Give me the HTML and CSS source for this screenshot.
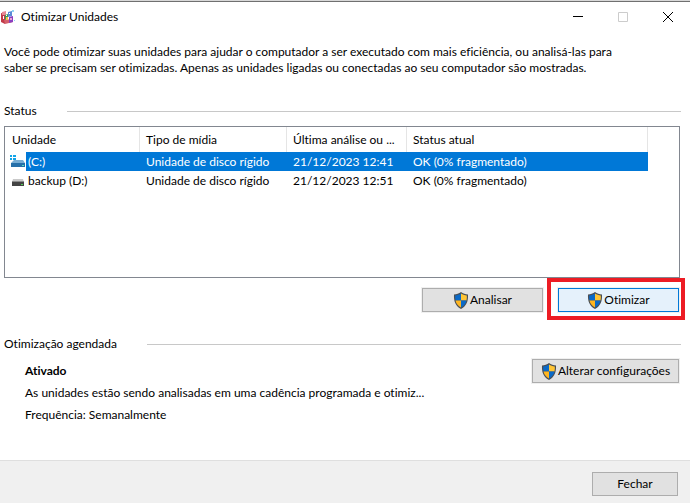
FILE: index.html
```html
<!DOCTYPE html>
<html lang="pt-BR">
<head>
<meta charset="UTF-8">
<title>Otimizar Unidades</title>
<link rel="stylesheet" href="styles.css">
</head>
<body>

<!-- shield shared by the buttons that need admin rights -->
<svg class="defs" width="0" height="0" aria-hidden="true">
    <symbol id="shield" viewBox="0 0 16 17">
        <path fill="#4a4f55" d="M8 0C6 1.6 3.600 2.300 1 2.400C.7 8.500 2 13.500 8 17C14 13.500 15.300 8.500 15 2.400C12.400 2.300 10 1.600 8 0Z"/>
        <path fill="#0a69c7" d="M8 1.500C6.300 2.700 4.500 3.300 2.200 3.500Q2 6.300 2.500 8.500H8Z"/>
        <path fill="#ffc535" d="M8 1.500C9.700 2.700 11.500 3.300 13.800 3.500Q14 6.300 13.500 8.500H8Z"/>
        <path fill="#ffb51f" d="M2.500 8.500H8V15.600C5 13.800 3.200 11.600 2.500 8.500Z"/>
        <path fill="#0a69c7" d="M13.500 8.500H8V15.600C11 13.800 12.800 11.600 13.500 8.500Z"/>
    </symbol>
</svg>

<div class="window">

    <header class="titlebar">
        <svg class="app-icon" width="16" height="16" viewBox="0 0 16 16" aria-hidden="true">
            <path fill="#c23a48" d="M1 4L5 5V15L1 13Z"/>
            <path fill="#e88a94" d="M2 3L6 2V6L2 6Z"/>
            <path fill="#d4606c" d="M4 11L13 10V13L5 15Z"/>
            <path fill="#3c9b58" d="M5 6L8 5V10L5 11Z"/>
            <path fill="#f1c14a" d="M6 8H8V11H6Z"/>
            <path fill="#5b8ad6" d="M8 3L12 2V7L8 8Z"/>
            <path fill="#8b3fc0" d="M9 8L13 7V13L9 14Z"/>
            <path fill="#e9a5d7" d="M10 9H12V11H10Z"/>
            <path fill="#8fd6f3" d="M12 1H14V3H12ZM14 11H15V12H14Z"/>
            <path fill="#fff" d="M3 7H4V10H3ZM6 6H7V7H6ZM9 4H10V5H9ZM8 8H9V10H8Z"/>
        </svg>
        <h1>Otimizar Unidades</h1>
        <div class="caption">
            <button type="button" aria-label="Minimizar">
                <svg width="10" height="10"><path d="M0 4.500H10"/></svg>
            </button>
            <button type="button" aria-label="Maximizar" disabled>
                <svg width="10" height="10"><path d="M.5 .5H9.500V9.500H.5Z"/></svg>
            </button>
            <button type="button" aria-label="Sair">
                <svg width="10" height="10"><path d="M0 0L10 10M10 0L0 10"/></svg>
            </button>
        </div>
    </header>

    <main>
        <p class="intro">Você pode otimizar suas unidades para ajudar o computador a ser executado com mais eficiência, ou analisá-las para saber se precisam ser otimizadas. Apenas as unidades ligadas ou conectadas ao seu computador são mostradas.</p>

        <h2 class="group">Status</h2>

        <div class="list">
            <table>
                <colgroup>
                    <col class="c-drive"><col class="c-media"><col class="c-last"><col class="c-status"><col>
                </colgroup>
                <thead>
                    <tr><th>Unidade</th><th>Tipo de mídia</th><th>Última análise ou ...</th><th>Status atual</th><td></td></tr>
                </thead>
                <tbody>
                    <tr class="selected">
                        <td class="drive"><div>
                            <svg width="16" height="16" viewBox="0 0 16 16" aria-hidden="true">
                                <path fill="#12a4e8" d="M0 1H2V3H0ZM3 1H6V3H3ZM0 4H2V6H0ZM3 4H6V6H3Z"/>
                                <path fill="#79aed4" d="M4 6H13L15 9H1Z"/>
                                <path fill="#2670a9" d="M1 9H15V13H1Z"/>
                                <path fill="#5ce0c0" d="M12 11H14V12H12Z"/>
                            </svg>
                            <span>(C:)</span>
                        </div></td>
                        <td>Unidade de disco rígido</td><td>21/12/2023 12:41</td><td>OK (0% fragmentado)</td><td></td>
                    </tr>
                    <tr>
                        <td class="drive"><div>
                            <svg width="16" height="16" viewBox="0 0 16 16" aria-hidden="true">
                                <path fill="#c9c9c9" d="M3 6H13L14 9H2Z"/>
                                <path fill="#444" d="M2 9H14V13H2Z"/>
                                <path fill="#8c8c8c" d="M2 8H14V9H2Z"/>
                                <path fill="#4fd04f" d="M11 11H13V12H11Z"/>
                            </svg>
                            <span>backup (D:)</span>
                        </div></td>
                        <td>Unidade de disco rígido</td><td>21/12/2023 12:51</td><td>OK (0% fragmentado)</td><td></td>
                    </tr>
                </tbody>
            </table>
        </div>

        <div class="actions">
            <button type="button" class="btn wide"><svg class="shield"><use href="#shield"/></svg>Analisar</button>
            <div class="marked">
                <button type="button" class="btn wide primary"><svg class="shield"><use href="#shield"/></svg>Otimizar</button>
            </div>
        </div>

        <h2 class="group">Otimização agendada</h2>

        <div class="schedule">
            <div class="info">
                <p><b>Ativado</b></p>
                <p>As unidades estão sendo analisadas em uma cadência programada e otimiz...</p>
                <p>Frequência: Semanalmente</p>
            </div>
            <button type="button" class="btn config"><svg class="shield"><use href="#shield"/></svg>Alterar configurações</button>
        </div>
    </main>

    <footer>
        <button type="button" class="btn close">Fechar</button>
    </footer>

</div>
</body>
</html>
```
FILE: styles.css
```css
* {
    box-sizing: border-box;
}
body {
    margin: 0;
    background: #fff;
    color: #000;
    font: 12px/16px Lato, "Open Sans", sans-serif;
    font-variant-ligatures: none;
}
h1, h2, p {
    margin: 0;
    font-size: 12px;
    font-weight: normal;
}
button {
    font: inherit;
    font-variant-ligatures: none;
    color: inherit;
}
.defs {
    position: absolute;
}
.window {
    display: flex;
    flex-direction: column;
    min-height: 100vh;
    border-top: 1px solid #d8d8d8;
}

/* title bar */
.titlebar {
    display: flex;
    align-items: center;
    gap: 5px;
    height: 31px;
    border-top: 1px solid #707070;
}
.caption {
    display: flex;
    margin-left: auto;
    height: 100%;
}
.caption button {
    display: flex;
    align-items: center;
    justify-content: center;
    width: 45px;
    padding: 0;
    border: 0;
    background: none;
}
.caption svg {
    fill: none;
    stroke: #000;
}
.caption button:disabled svg {
    stroke: #ccc;
}

main {
    flex: 1;
    padding: 12px 9px 0 4px;
}
.intro {
    margin-right: 40px;
}
.group {
    display: flex;
    align-items: center;
    gap: 30px;
    margin-top: 27px;
}
.group::after {
    content: "";
    flex: 1;
    border-top: 1px solid #c8c8c8;
}

/* drive list */
.list {
    height: 152px;
    margin: 7px 1px 0 0;
    overflow: hidden;
    border: 1px solid #828790;
}
table {
    width: 100%;
    table-layout: fixed;
    border-collapse: separate;
    border-spacing: 0;
}
.c-drive { width: 135px; }
.c-media { width: 147px; }
.c-last { width: 120px; }
.c-status { width: 241px; }
th, td {
    height: 19px;
    padding: 0 0 0 6px;
    text-align: left;
    font-weight: normal;
    white-space: nowrap;
}
th {
    height: 25px;
    border-right: 1px solid #e5e5e5;
}
th:first-child {
    padding-left: 7px;
}
.drive {
    padding-left: 5px;
}
.drive div {
    display: flex;
    align-items: center;
}
.drive span {
    flex: 1;
    padding-left: 2px;
    line-height: 19px;
}
.selected td:not(.drive):not(:last-child),
.selected span {
    background: #0078d7;
    color: #fff;
}

/* buttons */
.btn {
    display: flex;
    align-items: center;
    justify-content: center;
    gap: 1px;
    height: 24px;
    padding: 0;
    border: 1px solid #adadad;
    background: #e1e1e1;
    box-shadow: 0 0 0 1px #f0f0f0;
}
.wide {
    width: 121px;
}
.primary {
    border-color: #0078d7;
    background: #e5f1fb;
}
.shield {
    width: 16px;
    height: 17px;
}
.actions {
    display: flex;
    justify-content: flex-end;
    gap: 15px;
    margin: 10px 2px 0 0;
}
.marked {
    position: relative;
}
.marked::after {
    content: "";
    position: absolute;
    inset: -10px -6px -8px -11px;
    border: 4px solid #ed1c24;
    pointer-events: none;
}
.actions + .group {
    margin-top: 24px;
}

/* schedule */
.schedule {
    display: flex;
    align-items: flex-start;
    justify-content: space-between;
    margin: 7px 2px 0 21px;
}
.info {
    display: flex;
    flex-direction: column;
    gap: 6px;
    padding-top: 4px;
}
.config {
    width: 147px;
}

footer {
    display: flex;
    justify-content: flex-end;
    padding: 11px 12px 7px;
    border-top: 1px solid #dfdfdf;
    background: #f0f0f0;
}
.close {
    width: 86px;
    box-shadow: none;
}
```
